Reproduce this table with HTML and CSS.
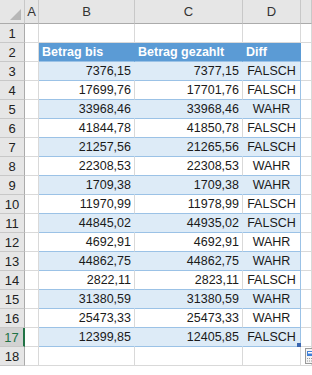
FILE: index.html
```html
<!DOCTYPE html>
<html lang="de">
<head>
<meta charset="utf-8">
<title>Betrag Vergleich</title>
<link rel="stylesheet" href="styles.css">
</head>
<body>
<div class="sheet">
  <div class="corner"><span class="tri"></span></div>
  <div class="ch">A</div>
  <div class="ch">B</div>
  <div class="ch">C</div>
  <div class="ch">D</div>
  <div class="ch edge"></div>

  <div class="rh">1</div><div class="c"></div><div class="c"></div><div class="c"></div><div class="c"></div><div class="c edge"></div>

  <div class="rh">2</div><div class="c"></div>
  <div class="c th">Betrag bis</div><div class="c th">Betrag gezahlt</div><div class="c th">Diff</div><div class="c edge"></div>

  <div class="rh">3</div><div class="c"></div><div class="c num band">7376,15</div><div class="c num band">7377,15</div><div class="c txt band">FALSCH</div><div class="c edge"></div>
  <div class="rh">4</div><div class="c"></div><div class="c num plain">17699,76</div><div class="c num plain">17701,76</div><div class="c txt plain">FALSCH</div><div class="c edge"></div>
  <div class="rh">5</div><div class="c"></div><div class="c num band">33968,46</div><div class="c num band">33968,46</div><div class="c txt band">WAHR</div><div class="c edge"></div>
  <div class="rh">6</div><div class="c"></div><div class="c num plain">41844,78</div><div class="c num plain">41850,78</div><div class="c txt plain">FALSCH</div><div class="c edge"></div>
  <div class="rh">7</div><div class="c"></div><div class="c num band">21257,56</div><div class="c num band">21265,56</div><div class="c txt band">FALSCH</div><div class="c edge"></div>
  <div class="rh">8</div><div class="c"></div><div class="c num plain">22308,53</div><div class="c num plain">22308,53</div><div class="c txt plain">WAHR</div><div class="c edge"></div>
  <div class="rh">9</div><div class="c"></div><div class="c num band">1709,38</div><div class="c num band">1709,38</div><div class="c txt band">WAHR</div><div class="c edge"></div>
  <div class="rh">10</div><div class="c"></div><div class="c num plain">11970,99</div><div class="c num plain">11978,99</div><div class="c txt plain">FALSCH</div><div class="c edge"></div>
  <div class="rh">11</div><div class="c"></div><div class="c num band">44845,02</div><div class="c num band">44935,02</div><div class="c txt band">FALSCH</div><div class="c edge"></div>
  <div class="rh">12</div><div class="c"></div><div class="c num plain">4692,91</div><div class="c num plain">4692,91</div><div class="c txt plain">WAHR</div><div class="c edge"></div>
  <div class="rh">13</div><div class="c"></div><div class="c num band">44862,75</div><div class="c num band">44862,75</div><div class="c txt band">WAHR</div><div class="c edge"></div>
  <div class="rh">14</div><div class="c"></div><div class="c num plain">2822,11</div><div class="c num plain">2823,11</div><div class="c txt plain">FALSCH</div><div class="c edge"></div>
  <div class="rh">15</div><div class="c"></div><div class="c num band">31380,59</div><div class="c num band">31380,59</div><div class="c txt band">WAHR</div><div class="c edge"></div>
  <div class="rh">16</div><div class="c"></div><div class="c num plain">25473,33</div><div class="c num plain">25473,33</div><div class="c txt plain">WAHR</div><div class="c edge"></div>
  <div class="rh sel">17</div><div class="c"></div><div class="c num band">12399,85</div><div class="c num band">12405,85</div><div class="c txt band last">FALSCH<span class="handle"></span></div><div class="c edge"></div>
  <div class="rh">18</div><div class="c"></div><div class="c"></div><div class="c"></div><div class="c"></div><div class="c edge"><span class="qa"><svg width="9" height="16" viewBox="0 0 9 16"><rect x="0.5" y="0.5" width="10" height="15" fill="#f4f4f4" stroke="#9a9a9a"/><rect x="2" y="3" width="8" height="5" fill="#3f7fd6"/><rect x="3" y="4" width="6" height="1.5" fill="#ffffff"/><path d="M2 10.5h7M2 13h7" stroke="#9a9a9a" stroke-dasharray="1 1"/></svg></span></div>
</div>
</body>
</html>
```
FILE: styles.css
```css
html, body {
  margin: 0;
  padding: 0;
  background: #ffffff;
}

.sheet {
  display: grid;
  grid-template-columns: 25px 14px 96px 108px 58px 11px;
  grid-template-rows: 24px repeat(18, 19px);
  width: 312px;
  font-family: "Liberation Sans", Arial, sans-serif;
  font-size: 12.5px;
  color: #1a1a1a;
  position: relative;
}

.sheet > div {
  box-sizing: border-box;
  border-right: 1px solid #d9d9d9;
  border-bottom: 1px solid #d9d9d9;
  white-space: nowrap;
  overflow: hidden;
}

.corner {
  background: #e6e6e6;
  border-right-color: #c8c8c8 !important;
  border-bottom-color: #ababab !important;
  position: relative;
}

.tri {
  position: absolute;
  right: 3px;
  bottom: 3px;
  width: 0;
  height: 0;
  border-left: 11px solid transparent;
  border-bottom: 11px solid #b7b7b7;
}

.ch {
  background: #e6e6e6;
  border-right-color: #c8c8c8 !important;
  border-bottom-color: #ababab !important;
  text-align: center;
  font-size: 13px;
  line-height: 24px;
  color: #333333;
}

.rh {
  background: #e6e6e6;
  border-right-color: #ababab !important;
  border-bottom-color: #c8c8c8 !important;
  text-align: center;
  font-size: 13px;
  line-height: 19px;
  color: #222222;
}

.rh.sel {
  background: #d2d2d2;
  color: #217346;
  border-right: 2px solid #217346 !important;
}

.c {
  background: #ffffff;
  line-height: 19px;
}

.th {
  background: #5b9bd5;
  color: #ffffff;
  font-weight: bold;
  padding-left: 3px;
  border-right-color: #5b9bd5 !important;
  border-bottom-color: #9bc2e6 !important;
}

.num {
  text-align: right;
  padding-right: 3px;
}

.txt {
  text-align: center;
}

.band {
  background: #ddebf7;
  border-right-color: #ddebf7 !important;
  border-bottom-color: #9bc2e6 !important;
}

.plain {
  border-bottom-color: #9bc2e6 !important;
}

.txt {
  border-right-color: #9bc2e6 !important;
}

.last {
  position: relative;
  overflow: visible !important;
}

.handle {
  position: absolute;
  right: -1px;
  bottom: -1px;
  width: 4px;
  height: 4px;
  background: #3a66b0;
}

.edge {
  position: relative;
  overflow: visible !important;
}

.qa {
  position: absolute;
  left: 4px;
  top: 1px;
  display: block;
  line-height: 0;
}
```
